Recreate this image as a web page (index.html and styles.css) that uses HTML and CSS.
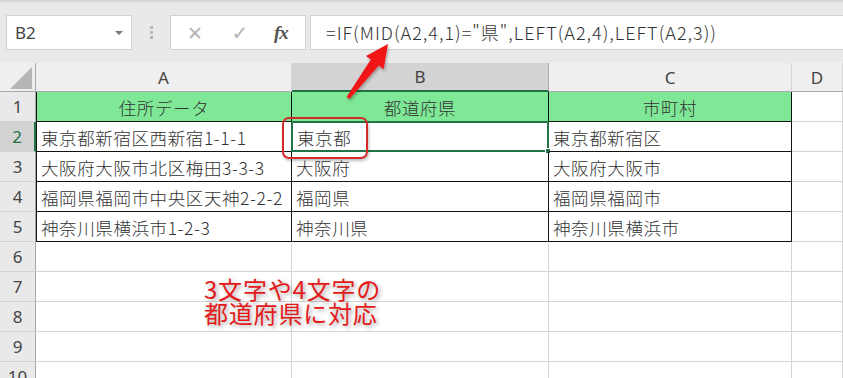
FILE: index.html
```html
<!DOCTYPE html>
<html lang="ja">
<head>
<meta charset="utf-8">
<link rel="stylesheet" href="styles.css">
</head>
<body>
<div class="app">
  <div class="toolbar">
    <div class="namebox"><span class="nb-text">B2</span><span class="nb-arrow"></span></div>
    <div class="dots"><i></i><i></i><i></i></div>
    <div class="fxbox">
      <span class="ic ic-x">✕</span>
      <span class="ic ic-ok">✓</span>
      <span class="ic ic-fx">fx</span>
    </div>
    <div class="formula">=IF(MID(A2,4,1)="県",LEFT(A2,4),LEFT(A2,3))</div>
  </div>
  <div class="sheet">
    <div class="ch corner"><span class="tri"></span></div>
    <div class="ch">A</div>
    <div class="ch sel">B</div>
    <div class="ch">C</div>
    <div class="ch">D</div>

    <div class="rh">1</div>
    <div class="c t tl hd">住所データ</div>
    <div class="c t hd">都道府県</div>
    <div class="c t hd">市町村</div>
    <div class="c"></div>

    <div class="rh rsel">2</div>
    <div class="c t tl">東京都新宿区西新宿1-1-1</div>
    <div class="c t active">東京都<span class="handle"></span></div>
    <div class="c t">東京都新宿区</div>
    <div class="c"></div>

    <div class="rh">3</div>
    <div class="c t tl">大阪府大阪市北区梅田3-3-3</div>
    <div class="c t">大阪府</div>
    <div class="c t">大阪府大阪市</div>
    <div class="c"></div>

    <div class="rh">4</div>
    <div class="c t tl">福岡県福岡市中央区天神2-2-2</div>
    <div class="c t">福岡県</div>
    <div class="c t">福岡県福岡市</div>
    <div class="c"></div>

    <div class="rh">5</div>
    <div class="c t tl">神奈川県横浜市1-2-3</div>
    <div class="c t">神奈川県</div>
    <div class="c t">神奈川県横浜市</div>
    <div class="c"></div>

    <div class="rh">6</div><div class="c"></div><div class="c"></div><div class="c"></div><div class="c"></div>
    <div class="rh">7</div><div class="c"></div><div class="c"></div><div class="c"></div><div class="c"></div>
    <div class="rh">8</div><div class="c"></div><div class="c"></div><div class="c"></div><div class="c"></div>
    <div class="rh">9</div><div class="c"></div><div class="c"></div><div class="c"></div><div class="c"></div>
    <div class="rh">10</div><div class="c"></div><div class="c"></div><div class="c"></div><div class="c"></div>
  </div>

  <div class="callout-box"></div>
  <div class="note">3文字や4文字の<br>都道府県に対応</div>
  <svg class="arrow" width="843" height="378" viewBox="0 0 843 378">
    <defs>
      <filter id="sh" x="-20%" y="-20%" width="140%" height="140%">
        <feDropShadow dx="1" dy="2" stdDeviation="1.5" flood-color="#000" flood-opacity="0.3"/>
      </filter>
    </defs>
    <polygon filter="url(#sh)" fill="#f01515" points="388,44 383.6,69.2 378.8,65.6 349.4,99 346.6,97 370.8,59.6 366,56"/>
  </svg>
</div>
</body>
</html>
```
FILE: styles.css
```css
* { box-sizing: border-box; }
html, body { margin: 0; padding: 0; }
body {
  width: 843px;
  height: 378px;
  overflow: hidden;
  background: #ffffff;
  font-family: "Noto Sans CJK JP", "Noto Sans", sans-serif;
}
.app {
  position: relative;
  width: 843px;
  height: 378px;
  overflow: hidden;
}
.toolbar {
  height: 63px;
  background: #e9e9e9;
  border-top: 2px solid #d6d6d6;
  padding-top: 13px;
  display: flex;
  align-items: flex-start;
}
.namebox {
  margin-left: 6px;
  width: 126px;
  height: 35px;
  background: #fff;
  border: 1px solid #d2d2d2;
  display: flex;
  align-items: center;
  justify-content: space-between;
  padding: 0 8px 0 8px;
}
.nb-text {
  font-family: "Noto Sans", "Liberation Sans", sans-serif;
  font-size: 17px;
  color: #444;
}
.nb-arrow {
  width: 0;
  height: 0;
  border-left: 4px solid transparent;
  border-right: 4px solid transparent;
  border-top: 4px solid #777;
}
.dots {
  width: 38px;
  height: 35px;
  display: flex;
  flex-direction: column;
  align-items: center;
  justify-content: center;
  gap: 2px;
}
.dots i {
  display: block;
  width: 3px;
  height: 3px;
  background: #b8b8b8;
}
.fxbox {
  width: 136px;
  height: 35px;
  background: #fff;
  border: 1px solid #d2d2d2;
  display: flex;
  align-items: center;
  padding-left: 14px;
}
.ic { display: inline-block; text-align: center; }
.ic-x {
  width: 20px;
  font-size: 19px;
  color: #b5b5b5;
  font-family: "DejaVu Sans", sans-serif;
  font-weight: 300;
}
.ic-ok {
  width: 20px;
  margin-left: 25px;
  font-size: 20px;
  color: #b5b5b5;
  font-family: "DejaVu Sans", sans-serif;
}
.ic-fx {
  margin-left: 24px;
  font-family: "Liberation Serif", serif;
  font-style: italic;
  font-weight: bold;
  font-size: 19px;
  color: #555;
  letter-spacing: -1px;
}
.formula {
  margin-left: 4px;
  flex: 1;
  height: 35px;
  background: #fff;
  border: 1px solid #d2d2d2;
  border-right: none;
  padding-left: 15px;
  font-size: 18px;
  font-weight: 300;
  letter-spacing: 1px;
  color: #333;
  line-height: 33px;
  white-space: nowrap;
}
.sheet {
  display: grid;
  grid-template-columns: 36px 256px 257px 243px 51px;
  grid-template-rows: 29px repeat(10, 30px);
}
.ch {
  background: #efefef;
  border-right: 1px solid #d5d5d5;
  border-bottom: 1px solid #ababab;
  font-family: "Noto Sans", "Liberation Sans", sans-serif;
  font-size: 17px;
  color: #444;
  display: flex;
  align-items: center;
  justify-content: center;
  line-height: 1;
}
.ch.corner {
  background: #efefef;
  border-right: 1px solid #ababab;
  position: relative;
}
.tri {
  position: absolute;
  right: 3px;
  bottom: 2px;
  width: 0;
  height: 0;
  border-left: 22px solid transparent;
  border-bottom: 22px solid #b6b6b6;
}
.ch.sel {
  background: #d3d3d3;
  border-bottom: 2px solid #217346;
  border-right: 1px solid #ababab;
}
.rh {
  background: #e9e9e9;
  border-right: 1px solid #a8a8a8;
  border-bottom: 1px solid #d3d3d3;
  font-family: "Noto Sans", "Liberation Sans", sans-serif;
  font-size: 17px;
  color: #444;
  display: flex;
  align-items: center;
  justify-content: center;
  line-height: 1;
}
.rh.rsel {
  background: #d3d3d3;
  border-right: 2px solid #217346;
  color: #217346;
}
.c {
  border-right: 1px solid #d4d4d4;
  border-bottom: 1px solid #d4d4d4;
  font-size: 17.5px;
  font-weight: 300;
  letter-spacing: 0.6px;
  color: #333;
  display: flex;
  align-items: center;
  padding-left: 4px;
  padding-top: 2px;
  white-space: nowrap;
  overflow: visible;
  position: relative;
}
.c.t {
  border-right: 1px solid #111;
  border-bottom: 1px solid #111;
}
.c.tl { border-left: 1px solid #111; padding-left: 4px; }
.c.hd {
  background: #7fe897;
  justify-content: center;
  padding-left: 0;
}
.c.active {
  border: 2px solid #217346;
  margin-left: -1px;
  margin-top: -1px;
  padding-left: 4px;
}
.handle {
  position: absolute;
  right: -4px;
  bottom: -4px;
  width: 6px;
  height: 6px;
  background: #217346;
  border: 1px solid #fff;
}
.callout-box {
  position: absolute;
  left: 282px;
  top: 117px;
  width: 86px;
  height: 42px;
  border: 2px solid #d52a2a;
  border-radius: 7px;
  box-shadow: 1px 2px 3px rgba(0,0,0,0.25);
}
.note {
  position: absolute;
  left: 204px;
  top: 277px;
  font-size: 24px;
  line-height: 24px;
  letter-spacing: 0.8px;
  color: #e41a1a;
  text-shadow: 2px 2px 4px rgba(0,0,0,0.35);
}
.arrow {
  position: absolute;
  left: 0;
  top: 0;
  pointer-events: none;
}
```
